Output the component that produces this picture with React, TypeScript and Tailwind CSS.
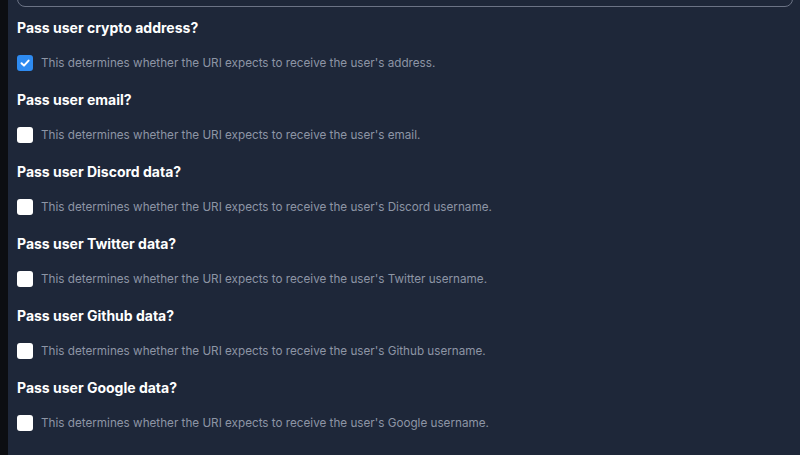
import React from "react";

const rows = [
  { title: "Pass user crypto address?", desc: "This determines whether the URI expects to receive the user's address.", checked: true },
  { title: "Pass user email?", desc: "This determines whether the URI expects to receive the user's email.", checked: false },
  { title: "Pass user Discord data?", desc: "This determines whether the URI expects to receive the user's Discord username.", checked: false },
  { title: "Pass user Twitter data?", desc: "This determines whether the URI expects to receive the user's Twitter username.", checked: false },
  { title: "Pass user Github data?", desc: "This determines whether the URI expects to receive the user's Github username.", checked: false },
  { title: "Pass user Google data?", desc: "This determines whether the URI expects to receive the user's Google username.", checked: false },
];

export default function App() {
  return (
    <div className="flex h-[455px] w-[800px] overflow-hidden bg-[#1e2739]" style={{ fontFamily: "Inter, 'Noto Sans', sans-serif" }}>
      <div className="w-[8px] shrink-0 bg-[#0c0e12]" />
      <div className="flex-1 pl-[9px] pr-[7px]">
        <div className="-mt-[33px] h-[40px] rounded-lg border border-[#6b7385]" />
        <div className="mt-[11px] flex flex-col">
          {rows.map((r) => (
            <div key={r.title} className="mb-[19px] flex flex-col">
              <div className="h-5 text-[14px] font-bold leading-5 text-white">{r.title}</div>
              <div className="mt-[17px] flex h-4 items-center">
                {r.checked ? (
                  <div className="flex h-4 w-4 shrink-0 items-center justify-center rounded-[3px] bg-[#2e8bf1]">
                    <svg width="12" height="12" viewBox="0 0 12 12" fill="none">
                      <path d="M2.5 6.2 L5 8.6 L9.6 3.6" stroke="white" strokeWidth="2" strokeLinecap="round" strokeLinejoin="round" />
                    </svg>
                  </div>
                ) : (
                  <div className="h-4 w-4 shrink-0 rounded-[3px] bg-white" />
                )}
                <span className="ml-2 mt-[2px] text-[11.7px] text-[#8d95a5]">{r.desc}</span>
              </div>
            </div>
          ))}
        </div>
      </div>
    </div>
  );
}
